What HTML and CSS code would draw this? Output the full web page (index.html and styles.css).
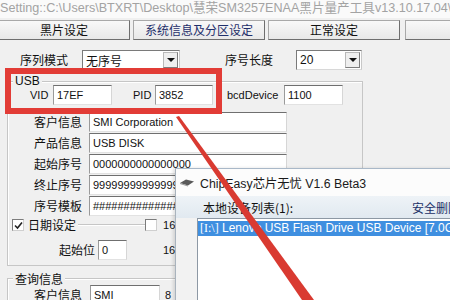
FILE: index.html
```html
<!DOCTYPE html>
<html lang="zh-CN">
<head>
    <meta charset="UTF-8">
    <meta name="viewport" content="width=device-width, initial-scale=1.0">
    <title>SM3257ENAA 量产工具</title>
    <link rel="stylesheet" href="styles.css">
</head>
<body>
    <div class="screen">
        <div class="titlebar">Setting::C:\Users\BTXRT\Desktop\慧荣SM3257ENAA黑片量产工具v13.10.17.04\</div>

        <div class="tabs">
            <div class="tab tab-first">黑片设定</div>
            <div class="tab tab-active">系统信息及分区设定</div>
            <div class="tab">正常设定</div>
            <div class="tab tab-last"></div>
        </div>

        <div class="page">
            <div class="mode-row">
                <span class="label label-mode">序列模式</span>
                <div class="combo combo-mode"><span class="combo-text">无序号</span><span class="combo-btn"></span></div>
                <span class="label label-len">序号长度</span>
                <div class="combo combo-len"><span class="combo-text lat">20</span><span class="combo-btn"></span></div>
            </div>

            <!-- USB / device info -->
            <div class="group group-usb">
                <span class="group-title lat">USB</span>
                <div class="usb-row">
                    <span class="lat vid-label">VID</span>
                    <div class="field f-vid">17EF</div>
                    <span class="lat pid-label">PID</span>
                    <div class="field f-pid">3852</div>
                    <span class="lat bcd-label">bcdDevice</span>
                    <div class="field f-bcd">1100</div>
                </div>
                <div class="info-row"><span class="label row-label">客户信息</span><div class="field f-info">SMI Corporation</div></div>
                <div class="info-row"><span class="label row-label">产品信息</span><div class="field f-info">USB DISK</div></div>
                <div class="info-row"><span class="label row-label">起始序号</span><div class="field f-info">0000000000000000</div></div>
                <div class="info-row"><span class="label row-label">终止序号</span><div class="field f-info">9999999999999999</div></div>
                <div class="info-row"><span class="label row-label">序号模板</span><div class="field f-info">################</div></div>

                <div class="date-row">
                    <span class="check checked">
                        <svg width="9" height="9" viewBox="0 0 9 9"><path d="M1 4.5 L3.5 7 L8 1.5" fill="none" stroke="#222" stroke-width="1.6"/></svg>
                    </span>
                    <span class="label date-label">日期设定</span>
                    <span class="rule"></span>
                    <span class="check check-plain"></span>
                    <span class="lat num-16">16</span>
                </div>
                <div class="start-row">
                    <span class="label start-label">起始位</span>
                    <div class="field f-start">0</div>
                    <span class="lat num-start">16</span>
                </div>
            </div>

            <div class="group group-query">
                <span class="group-title">查询信息</span>
                <div class="info-row query-row">
                    <span class="label row-label">客户信息</span>
                    <div class="field f-query">SMI</div>
                    <span class="lat num-8">8</span>
                </div>
            </div>
        </div>

        <!-- second program window on top -->
        <div class="chip-window">
            <div class="chip-title">
                <svg class="chip-icon" width="14" height="9" viewBox="0 0 14 9">
                    <polygon points="0,5 6,1.5 14,3.5 8,7.5" fill="#5a5a5a"/>
                    <polygon points="0,5 8,7.5 8,8.5 0,6" fill="#9a9a9a"/>
                </svg>
                <span>ChipEasy芯片无忧 V1.6 Beta3</span>
            </div>
            <div class="chip-head">
                <span class="head-left">本地设备列表(1):</span>
                <span class="head-right">安全删除</span>
            </div>
            <div class="chip-body">
                <div class="device-list">
                    <div class="device selected"><span class="drive">[I:\]</span> Lenovo USB Flash Drive USB Device [7.0GB]</div>
                </div>
            </div>
        </div>

        <div class="mark-box"></div>
        <svg class="arrow" width="450" height="300" viewBox="0 0 450 300">
            <polygon points="176,117 179,116 314,300 302,300" fill="#d93a31"/>
        </svg>
    </div>
</body>
</html>
```

FILE: styles.css
```css
body {
    margin: 0;
    padding: 0;
    font-family: "Liberation Sans", "Noto Sans CJK SC", sans-serif;
    font-size: 12px;
    color: #111;
}

.screen {
    position: relative;
    width: 450px;
    height: 300px;
    overflow: hidden;
    background-color: #f0f0f0;
}

.titlebar {
    height: 18px;
    line-height: 16px;
    background-color: #fafafa;
    color: #a3a3a3;
    font-size: 12.6px;
    white-space: nowrap;
    overflow: hidden;
}

.tabs {
    display: flex;
    gap: 3px;
    margin: 2px 0 0 -2px;
    height: 20px;
}

.tab {
    flex: none;
    width: 132px;
    box-sizing: border-box;
    border: 1px solid #a8a8a8;
    border-right-color: #6e6e6e;
    border-bottom-color: #6e6e6e;
    background: linear-gradient(#f8f8f8, #e8e8e8);
    text-align: center;
    line-height: 18px;
    font-family: "Noto Sans CJK SC", sans-serif;
}

.tab-active {
    color: #1f2f6b;
}

.tab-last {
    margin-left: 2px;
}

.label {
    font-family: "Noto Sans CJK SC", sans-serif;
    font-size: 12px;
    line-height: 16px;
    white-space: nowrap;
}

.lat {
    font-family: "Liberation Sans", sans-serif;
    font-size: 11px;
    line-height: 14px;
}

.page {
    padding-top: 10px;
}

.mode-row {
    display: flex;
    align-items: center;
    height: 20px;
}

.label-mode {
    margin-left: 20px;
    width: 62px;
}

.label-len {
    margin-left: 45px;
    width: 71px;
}

.combo {
    display: flex;
    align-items: center;
    box-sizing: border-box;
    height: 20px;
    border: 1px solid #7a7a7a;
    border-right-color: #c8c8c8;
    border-bottom-color: #d8d8d8;
    background-color: white;
}

.combo-mode {
    width: 98px;
}

.combo-len {
    width: 66px;
}

.combo-text {
    flex: 1;
    padding-left: 3px;
    font-family: "Noto Sans CJK SC", sans-serif;
}

.combo-text.lat {
    font-family: "Liberation Sans", sans-serif;
    font-size: 12px;
}

.combo-btn {
    position: relative;
    width: 15px;
    height: 16px;
    margin-right: 1px;
    box-sizing: border-box;
    border: 1px solid #b9b9b9;
    border-right-color: #7d7d7d;
    border-bottom-color: #7d7d7d;
    background-color: #efefef;
}

.combo-btn::after {
    content: "";
    position: absolute;
    left: 3px;
    top: 5px;
    border-left: 4px solid transparent;
    border-right: 4px solid transparent;
    border-top: 4px solid #111;
}

.group {
    position: relative;
    box-sizing: border-box;
    width: 356px;
    margin-left: 7px;
    border: 1px solid #c6c6c6;
    box-shadow: inset 1px 1px 0 #fff;
}

.group-title {
    position: absolute;
    top: -8px;
    left: 5px;
    padding: 0 2px;
    background-color: #f0f0f0;
    font-family: "Noto Sans CJK SC", sans-serif;
    font-size: 12px;
    line-height: 15px;
}

.group-title.lat {
    font-family: "Liberation Sans", sans-serif;
}

.group-usb {
    margin-top: 11px;
    height: 185px;
    padding-top: 3px;
}

.field {
    box-sizing: border-box;
    height: 20px;
    padding-left: 3px;
    border: 1px solid #6f6f6f;
    border-left-color: #9a9a9a;
    border-right-color: #d6d6d6;
    border-bottom-color: #e2e2e2;
    background-color: white;
    font-family: "Liberation Sans", sans-serif;
    font-size: 11px;
    line-height: 18px;
    white-space: nowrap;
    overflow: hidden;
}

.usb-row {
    display: flex;
    align-items: center;
    height: 20px;
}

.vid-label {
    margin-left: 22px;
    width: 23px;
}

.f-vid {
    width: 59px;
}

.pid-label {
    margin-left: 21px;
    width: 22px;
}

.f-pid {
    width: 58px;
}

.bcd-label {
    margin-left: 14px;
    width: 57px;
}

.f-bcd {
    width: 59px;
}

.info-row {
    display: flex;
    align-items: center;
    height: 20px;
    margin-bottom: 1px;
}

.usb-row + .info-row {
    margin-top: 7px;
}

.row-label {
    width: 74px;
    text-align: right;
}

.f-info {
    width: 198px;
    margin-left: 7px;
}

.date-row {
    display: flex;
    align-items: center;
    height: 14px;
    margin-top: 2px;
}

.check {
    display: flex;
    align-items: center;
    justify-content: center;
    box-sizing: border-box;
    width: 12px;
    height: 12px;
    border: 1px solid #7c7c7c;
    border-right-color: #cfcfcf;
    border-bottom-color: #cfcfcf;
    background-color: white;
}

.checked {
    margin-left: 4px;
}

.date-label {
    margin-left: 4px;
}

.rule {
    width: 67px;
    margin-left: 2px;
    border-top: 1px solid #c6c6c6;
    border-bottom: 1px solid #fff;
}

.num-16 {
    margin-left: 6px;
}

.start-row {
    display: flex;
    align-items: center;
    height: 20px;
    margin-top: 8px;
}

.start-label {
    width: 87px;
    text-align: right;
}

.f-start {
    width: 29px;
    margin-left: 3px;
}

.num-start {
    margin-left: 36px;
}

.group-query {
    margin-top: 12px;
    height: 40px;
    padding-top: 6px;
}

.f-query {
    width: 70px;
    margin-left: 8px;
}

.num-8 {
    margin-left: 5px;
}

/* ChipEasy window */
.chip-window {
    position: absolute;
    left: 175px;
    top: 168px;
    width: 285px;
    height: 140px;
    border-left: 1px solid #a9b3bd;
    border-top: 1px solid #a9b8c8;
    background-color: #f2f2f2;
    box-shadow: -2px 0 3px rgba(0, 0, 0, 0.12);
}

.chip-title {
    display: flex;
    align-items: center;
    height: 27px;
    padding-left: 4px;
    background-color: #fcfcfc;
    font-family: "Liberation Sans", "Noto Sans CJK SC", sans-serif;
    font-size: 12.3px;
    color: #1a1a1a;
    white-space: nowrap;
}

.chip-icon {
    margin-right: 6px;
}

.chip-head {
    display: flex;
    align-items: center;
    height: 22px;
    padding-left: 27px;
    background: linear-gradient(#eef3f7, #e1e9f0);
    font-family: "Noto Sans CJK SC", sans-serif;
    font-size: 12px;
    white-space: nowrap;
}

.head-left {
    width: 209px;
    color: #111;
}

.head-right {
    color: #1a2f66;
}

.chip-body {
    padding-left: 21px;
}

.device-list {
    height: 100px;
    border: 1px solid #8d98a4;
    background-color: white;
}

.device {
    margin-top: 2px;
    height: 15px;
    padding-left: 2px;
    line-height: 15px;
    font-family: "Liberation Sans", sans-serif;
    font-size: 12px;
    color: white;
    white-space: nowrap;
}

.selected {
    background-color: #3f8fe0;
}

.drive {
    font-family: "Liberation Serif", serif;
}

.mark-box {
    position: absolute;
    left: 5px;
    top: 68px;
    width: 217px;
    height: 46px;
    box-sizing: border-box;
    border: 6px solid #e23c36;
}

.arrow {
    position: absolute;
    left: 0;
    top: 0;
    pointer-events: none;
}
```
